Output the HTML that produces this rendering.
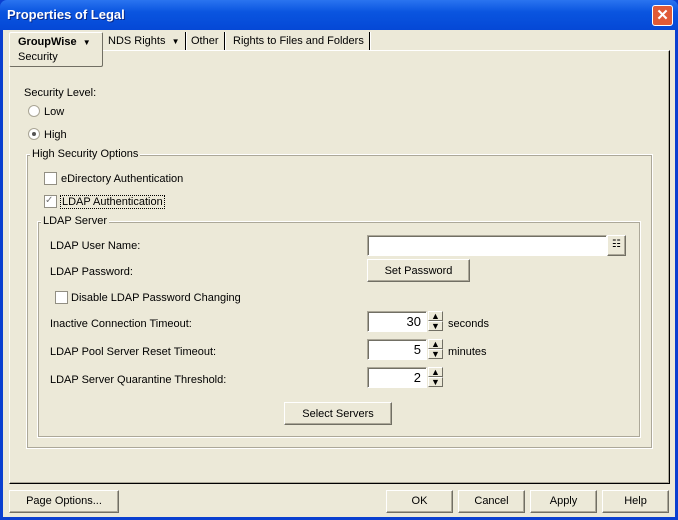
<!DOCTYPE html>
<html><head><style>
*{margin:0;padding:0;box-sizing:border-box}
body{width:678px;height:520px;background:#0a3fd0;font-family:"Liberation Sans",sans-serif;font-size:11px;color:#000;position:relative;overflow:hidden}
.a{position:absolute}
.win{left:3px;top:30px;width:672px;height:487px;background:#ece9d8}
.title{left:0;top:0;width:678px;height:30px;background:linear-gradient(#2a74f0,#0a55e0 40%,#0548d6);border-radius:7px 7px 0 0}
.title span{position:absolute;left:7px;top:7px;color:#fff;font-weight:bold;font-size:13px;text-shadow:1px 1px #0a2a8a}
.close{left:652px;top:5px;width:21px;height:21px;background:#e05a36;border:1px solid #fff;border-radius:3px;color:#fff;font-size:15px;font-weight:bold;text-align:center;line-height:19px}
.panel{left:9px;top:50px;width:661px;height:434px;border-top:1px solid #fff;border-left:1px solid #fff;border-right:1px solid #000;border-bottom:1px solid #000;box-shadow:inset -1px -1px #aca899}
.tab{top:32px;height:18px;line-height:18px;padding:0 5px;border-right:1px solid #000;box-shadow:1px 0 #fff}
.grp{border:1px solid #fff;outline:1px solid #aca899;outline-offset:-2px}
.lg{background:#ece9d8;padding:0 2px;top:-7px;left:3px}
.btn{height:23px;background:#ece9d8;border:1px solid;border-color:#fff #716f64 #716f64 #fff;box-shadow:inset -1px -1px #aca899;text-align:center;line-height:21px}
.rad{width:12px;height:12px;border-radius:50%;background:#fff;border:1px solid #a9a595}
.chk{width:13px;height:13px;background:#fff;border:1px solid #928f83}
.inp{height:21px;background:#fff;border:1px solid;border-color:#aca899 #fff #fff #aca899;box-shadow:inset 1px 1px #716f64;text-align:right;padding-right:5px;line-height:19px;font-size:13px}
.spin{width:15px;height:21px}
.spin div{width:15px;height:10px;background:#ece9d8;border:1px solid;border-color:#fff #716f64 #716f64 #fff;font-size:9px;line-height:8px;text-align:center}
</style></head><body>
<div class="a title"><span>Properties of Legal</span></div>
<div class="a close">✕</div>
<div class="a win"></div>
<div class="a panel"></div>
<div class="a" style="left:9px;top:32px;width:94px;height:35px;background:#ece9d8;border:1px solid #fff;border-right:1px solid #716f64;border-bottom:1px solid #716f64;border-radius:2px"></div>
<div class="a" style="left:18px;top:36px;font-weight:bold">GroupWise&nbsp; <span style="font-size:8px">▼</span></div>
<div class="a" style="left:18px;top:51px">Security</div>
<div class="a tab" style="left:102px;padding-left:6px">NDS Rights&nbsp; <span style="font-size:8px">▼</span></div>
<div class="a tab" style="left:186px">Other</div>
<div class="a tab" style="left:228px">Rights to Files and Folders</div>
<div class="a" style="left:24px;top:87px">Security Level:</div>
<div class="a rad" style="left:28px;top:105px"></div><div class="a" style="left:44px;top:106px">Low</div>
<div class="a rad" style="left:28px;top:128px"><div class="a" style="left:3px;top:3px;width:4px;height:4px;border-radius:50%;background:#555"></div></div><div class="a" style="left:44px;top:129px">High</div>
<div class="a grp" style="left:26px;top:154px;width:627px;height:295px"><div class="a lg">High Security Options</div></div>
<div class="a chk" style="left:44px;top:172px"></div><div class="a" style="left:61px;top:173px">eDirectory Authentication</div>
<div class="a chk" style="left:44px;top:195px;font-size:10px;line-height:10px;color:#777">✓</div><div class="a" style="left:60px;top:195px;border:1px dotted #000;padding:0 1px">LDAP Authentication</div>
<div class="a grp" style="left:37px;top:221px;width:604px;height:217px"><div class="a lg">LDAP Server</div></div>
<div class="a" style="left:50px;top:240px">LDAP User Name:</div>
<div class="a inp" style="left:367px;top:235px;width:240px"></div>
<div class="a btn" style="left:607px;top:235px;width:19px;height:21px;font-size:10px;line-height:18px">☷</div>
<div class="a" style="left:50px;top:266px">LDAP Password:</div>
<div class="a btn" style="left:367px;top:259px;width:103px;line-height:22px">Set Password</div>
<div class="a chk" style="left:55px;top:291px"></div><div class="a" style="left:71px;top:292px">Disable LDAP Password Changing</div>
<div class="a" style="left:50px;top:318px">Inactive Connection Timeout:</div>
<div class="a inp" style="left:367px;top:311px;width:60px">30</div>
<div class="a spin" style="left:428px;top:311px"><div>▲</div><div>▼</div></div>
<div class="a" style="left:448px;top:318px">seconds</div>
<div class="a" style="left:50px;top:346px">LDAP Pool Server Reset Timeout:</div>
<div class="a inp" style="left:367px;top:339px;width:60px">5</div>
<div class="a spin" style="left:428px;top:339px"><div>▲</div><div>▼</div></div>
<div class="a" style="left:448px;top:346px">minutes</div>
<div class="a" style="left:50px;top:374px">LDAP Server Quarantine Threshold:</div>
<div class="a inp" style="left:367px;top:367px;width:60px">2</div>
<div class="a spin" style="left:428px;top:367px"><div>▲</div><div>▼</div></div>
<div class="a btn" style="left:284px;top:402px;width:108px;line-height:22px">Select Servers</div>
<div class="a btn" style="left:9px;top:490px;width:110px">Page Options...</div>
<div class="a btn" style="left:386px;top:490px;width:67px">OK</div>
<div class="a btn" style="left:458px;top:490px;width:67px">Cancel</div>
<div class="a btn" style="left:530px;top:490px;width:67px">Apply</div>
<div class="a btn" style="left:602px;top:490px;width:67px">Help</div>
</body></html>
